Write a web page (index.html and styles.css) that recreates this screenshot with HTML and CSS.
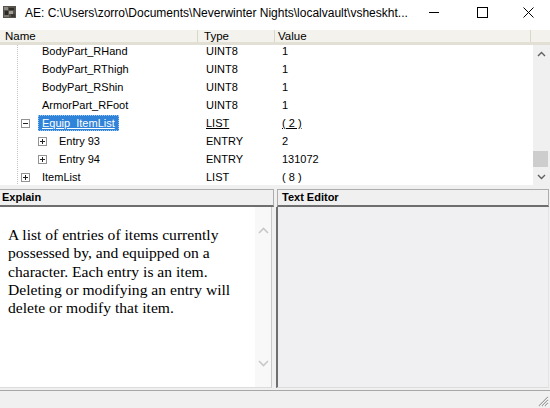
FILE: index.html
```html
<!DOCTYPE html>
<html>
<head>
<meta charset="utf-8">
<link rel="stylesheet" href="styles.css">
</head>
<body>
<div class="window">
  <div class="titlebar">
    <svg class="appicon" viewBox="0 0 13 12" width="13" height="12">
      <rect x="0" y="0" width="13" height="12" fill="#55524c"/>
      <rect x="1" y="1" width="4" height="3" fill="#8c8880"/>
      <rect x="6" y="2" width="5" height="2" fill="#2e2c29"/>
      <rect x="2" y="5" width="3" height="4" fill="#2a2926"/>
      <rect x="6" y="5" width="4" height="3" fill="#a29e95"/>
      <rect x="8" y="8" width="4" height="3" fill="#3b3935"/>
      <rect x="1" y="9" width="5" height="2" fill="#7a766e"/>
    </svg>
    <span class="title">AE: C:\Users\zorro\Documents\Neverwinter Nights\localvault\vsheskht...</span>
    <div class="controls">
      <span class="ctl ctl-min"><svg width="10" height="10" viewBox="0 0 10 10"><line x1="0" y1="5.5" x2="10" y2="5.5" stroke="#000" stroke-width="1"/></svg></span>
      <span class="ctl ctl-max"><svg width="11" height="11" viewBox="0 0 11 11"><rect x="0.5" y="0.5" width="10" height="10" fill="none" stroke="#000" stroke-width="1"/></svg></span>
      <span class="ctl ctl-close"><svg width="11" height="11" viewBox="0 0 11 11"><path d="M0.5 0.5 L10.5 10.5 M10.5 0.5 L0.5 10.5" stroke="#000" stroke-width="1"/></svg></span>
    </div>
  </div>

  <div class="treepane">
    <div class="lvheader">
      <div class="hc hc-name">Name</div>
      <div class="hc hc-type">Type</div>
      <div class="hc hc-value">Value</div>
      <div class="hc hc-rest"></div>
    </div>
    <div class="treebody">
      <div class="rows">
        <div class="rowsinner">
          <div class="row"><div class="name lv1"><span class="slot"></span><span class="label">BodyPart_RHand</span></div><div class="type">UINT8</div><div class="value">1</div></div>
          <div class="row"><div class="name lv1"><span class="slot"></span><span class="label">BodyPart_RThigh</span></div><div class="type">UINT8</div><div class="value">1</div></div>
          <div class="row"><div class="name lv1"><span class="slot"></span><span class="label">BodyPart_RShin</span></div><div class="type">UINT8</div><div class="value">1</div></div>
          <div class="row"><div class="name lv1"><span class="slot"></span><span class="label">ArmorPart_RFoot</span></div><div class="type">UINT8</div><div class="value">1</div></div>
          <div class="row"><div class="name lv1"><span class="slot box minus"></span><span class="label selected">Equip_ItemList</span></div><div class="type hot">LIST</div><div class="value hot">( 2 )</div></div>
          <div class="row"><div class="name lv2"><span class="slot box plus"></span><span class="label">Entry 93</span></div><div class="type">ENTRY</div><div class="value">2</div></div>
          <div class="row"><div class="name lv2"><span class="slot box plus"></span><span class="label">Entry 94</span></div><div class="type">ENTRY</div><div class="value">131072</div></div>
          <div class="row"><div class="name lv1"><span class="slot box plus"></span><span class="label">ItemList</span></div><div class="type">LIST</div><div class="value">( 8 )</div></div>
        </div>
      </div>
      <div class="vscroll">
        <div class="sbtn"><svg width="9" height="6" viewBox="0 0 9 6"><polyline points="1,5 4.5,1.5 8,5" fill="none" stroke="#606060" stroke-width="1.4"/></svg></div>
        <div class="strack"><div class="thumb"></div></div>
        <div class="sbtn"><svg width="9" height="6" viewBox="0 0 9 6"><polyline points="1,1 4.5,4.5 8,1" fill="none" stroke="#606060" stroke-width="1.4"/></svg></div>
      </div>
    </div>
  </div>

  <div class="splitter"></div>

  <div class="panes">
    <div class="pane explain">
      <div class="panehead">Explain</div>
      <div class="explainbody">
        <p class="explaintext">A list of entries of items currently<br>possessed by, and equipped on a<br>character. Each entry is an item.<br>Deleting or modifying an entry will<br>delete or modify that item.</p>
        <div class="escroll">
          <svg width="11" height="7" viewBox="0 0 11 7"><polyline points="1,6 5.5,1.5 10,6" fill="none" stroke="#c8c8c8" stroke-width="1.6"/></svg>
          <svg width="11" height="7" viewBox="0 0 11 7"><polyline points="1,1 5.5,5.5 10,1" fill="none" stroke="#c8c8c8" stroke-width="1.6"/></svg>
        </div>
      </div>
    </div>
    <div class="pane editor">
      <div class="panehead">Text Editor</div>
      <div class="editorbody"></div>
    </div>
  </div>

  <div class="statusbar">
    <svg class="grip" width="12" height="12" viewBox="0 0 12 12">
      <path d="M11 2 L2 11 M11 5 L5 11 M11 8 L8 11" stroke="#a0a0a0" stroke-width="1.2"/>
      <path d="M11 3 L3 11 M11 6 L6 11 M11 9 L9 11" stroke="#ffffff" stroke-width="0.8"/>
    </svg>
  </div>
</div>
</body>
</html>
```

FILE: styles.css
```css
* { box-sizing: border-box; }
html, body { margin: 0; padding: 0; }
body {
  width: 550px;
  height: 408px;
  overflow: hidden;
  background: #f0f0f0;
  font-family: "Liberation Sans", Arial, sans-serif;
  font-size: 11px;
  color: #000;
}
.window {
  width: 550px;
  height: 408px;
  display: flex;
  flex-direction: column;
}

/* title bar */
.titlebar {
  height: 30px;
  flex: none;
  background: #fff;
  display: flex;
  align-items: flex-start;
}
.appicon { margin: 6px 0 0 3px; flex: none; }
.title {
  margin-left: 9px;
  padding-top: 5px;
  font-size: 12px;
  line-height: 16px;
  white-space: nowrap;
  color: #000;
}
.controls { margin-left: auto; display: flex; }
.ctl {
  height: 24px;
  display: flex;
  align-items: center;
  justify-content: center;
}
.ctl-min { width: 52px; }
.ctl-max { width: 46px; }
.ctl-close { width: 46px; }

/* tree / list view */
.treepane {
  height: 155px;
  flex: none;
  background: #fff;
  display: flex;
  flex-direction: column;
}
.lvheader {
  height: 15px;
  flex: none;
  display: flex;
  background: #f3f2ec;
  border-bottom: 3px solid #e2e0d4;
  font-size: 11.5px;
  line-height: 12px;
}
.hc {
  padding-left: 5px;
  border-right: 1px solid #d9d7ca;
}
.hc-name { width: 198px; }
.hc-type { width: 77px; padding-left: 6px; }
.hc-value { width: 256px; padding-left: 3px; }
.hc-rest { flex: 1; border-right: none; }

.treebody {
  height: 140px;
  display: flex;
}
.rows {
  flex: 1;
  overflow: hidden;
  background: repeating-linear-gradient(to bottom, #c4c4c4 0 1px, transparent 1px 2px) no-repeat 17px 0 / 1px 100%;
}
.rowsinner { margin-top: -3px; }
.row {
  height: 18px;
  line-height: 18px;
  display: grid;
  grid-template-columns: 198px 77px 1fr;
  white-space: nowrap;
}
.name {
  display: flex;
  align-items: center;
  gap: 8px;
}
.name.lv1 { padding-left: 21px; }
.name.lv2 { padding-left: 38px; }
.slot {
  width: 9px;
  height: 9px;
  flex: none;
  display: flex;
  align-items: center;
  justify-content: center;
}
.box {
  border: 1px solid #929292;
  background: #fff;
  position: relative;
}
.box::before {
  content: "";
  width: 5px;
  height: 1px;
  background: #222;
}
.box.plus::after {
  content: "";
  position: absolute;
  left: 3px;
  top: 1px;
  width: 1px;
  height: 5px;
  background: #222;
}
.label {
  padding: 0 4px;
  line-height: 16px;
  height: 16px;
}
.label.selected {
  background: #2f83d9;
  color: #fff;
  text-decoration: underline;
  outline: 1px dotted #9cc8f2;
  outline-offset: -1px;
}
.type { padding-left: 8px; }
.value { padding-left: 7px; }
.hot { text-decoration: underline; }

.vscroll {
  width: 17px;
  flex: none;
  background: #f0f0f0;
  display: flex;
  flex-direction: column;
}
.sbtn {
  height: 17px;
  flex: none;
  display: flex;
  align-items: center;
  justify-content: center;
}
.strack { flex: 1; }
.thumb {
  height: 16px;
  margin: 89px 2px 0 0;
  background: #cdcdcd;
}

.splitter { height: 4px; flex: none; background: #f0f0f0; }

/* bottom panes */
.panes {
  height: 199px;
  flex: none;
  display: flex;
  gap: 3px;
}
.pane { display: flex; flex-direction: column; }
.explain { width: 274px; }
.editor { flex: 1; margin-right: 1px; }
.panehead {
  height: 18px;
  flex: none;
  background: #f0f0f0;
  border: 1px solid #adadad;
  border-bottom: 2px solid #6e6e6e;
  font-weight: bold;
  line-height: 15px;
  padding-left: 4px;
}
.explain .panehead { border-left: none; padding-left: 2px; }

.explainbody {
  flex: 1;
  display: flex;
  background: #fff;
  border-right: 1px solid #c9c9c9;
  margin-right: 2px;
  border-bottom: 1px solid #dcdcdc;
}
.explaintext {
  flex: 1;
  margin: 0;
  padding: 19px 0 0 8px;
  font-family: "Liberation Serif", "Times New Roman", serif;
  font-size: 15.6px;
  line-height: 18.3px;
  white-space: nowrap;
}
.escroll {
  width: 16px;
  flex: none;
  background: #f8f8f8;
  display: flex;
  flex-direction: column;
  justify-content: space-between;
  align-items: center;
  padding: 20px 0;
}
.editorbody {
  flex: 1;
  background: #f0eff1;
  border-left: 2px solid #6f6f6f;
  border-right: 1px solid #e4e4e4;
  border-bottom: 1px solid #dcdcdc;
  margin-left: -1px;
}

.statusbar {
  flex: 1;
  display: flex;
  justify-content: flex-end;
  align-items: flex-end;
  background: linear-gradient(to bottom, #f0f0f0 0 2px, #a7a7a7 2px 3px, #f0f0f0 3px);
}
.grip { margin: 0 1px 1px 0; }
```
